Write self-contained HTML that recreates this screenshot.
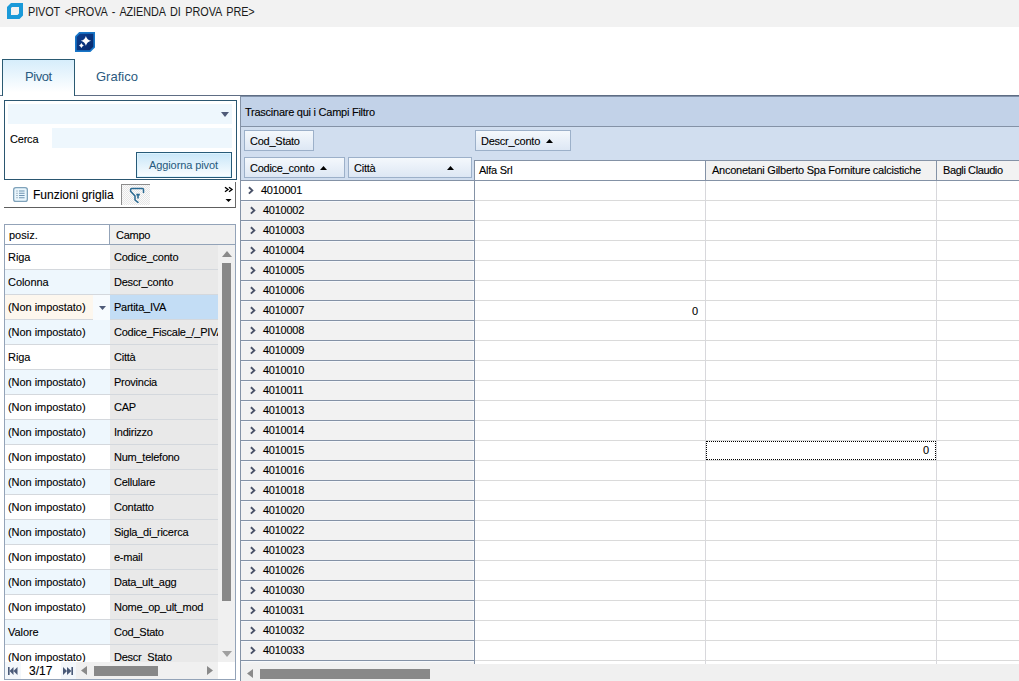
<!DOCTYPE html><html><head><meta charset="utf-8"><style>
*{box-sizing:border-box;margin:0;padding:0}
html,body{width:1019px;height:681px;overflow:hidden;background:#fff}
body{position:relative;font-family:"Liberation Sans",sans-serif;font-size:11px;color:#000}
.a{position:absolute}
.t{position:absolute;white-space:nowrap;line-height:12px;font-size:11px;letter-spacing:-0.25px;-webkit-text-stroke:0.1px currentColor}
.btn{position:absolute;border:1px solid #9cb0c9;background:linear-gradient(#f4f8fc,#dde7f4)}
</style></head><body>
<div class="a" style="left:0;top:0;width:1019px;height:27px;background:#f2f2f2"></div>
<svg class="a" style="left:7px;top:3px" width="16" height="16" viewBox="0 0 16 16"><path fill="#1a9ad9" fill-rule="evenodd" d="M4 0H16V12.5L12.5 16H0V4Z M5 4H12V10.5L10.5 12H4V5Z"/></svg>
<div class="t" style="left:28px;top:6px;font-size:12.4px;letter-spacing:-0.1px;word-spacing:2px;color:#1a1a1a;-webkit-text-stroke:0;transform:scaleX(0.877);transform-origin:0 0">PIVOT &lt;PROVA - AZIENDA DI PROVA PRE&gt;</div>
<svg class="a" style="left:75px;top:32px" width="20" height="20" viewBox="0 0 20 20"><defs><linearGradient id="g1" x1="0" y1="0" x2="1" y2="1"><stop offset="0" stop-color="#0b3f90"/><stop offset="1" stop-color="#08296c"/></linearGradient></defs><path fill="#1876c8" d="M4.2 0H20V15.4L15.4 20H0V4.2Z"/><path fill="url(#g1)" d="M4.9 1.7H18.3V14.7L14.7 18.3H1.7V4.9Z"/><path fill="#fff" d="M10.9 3.9Q11.9 7.8 16.1 8.85Q11.9 9.9 10.9 13.8Q9.9 9.9 5.8 8.85Q9.9 7.8 10.9 3.9Z"/><path fill="#fff" d="M6.4 11.1Q7.1 12.8 8.8 13.5Q7.1 14.2 6.4 15.9Q5.7 14.2 4 13.5Q5.7 12.8 6.4 11.1Z"/></svg>
<div class="a" style="left:0;top:95px;width:1019px;height:1px;background:#5e6d84"></div>
<div class="a" style="left:2px;top:59px;width:73px;height:37px;border:1px solid #2a5a72;border-bottom:none;background:linear-gradient(#d6edfb,#ffffff 90%)"></div>
<div class="t" style="left:25px;top:71px;font-size:13px;letter-spacing:-0.45px;color:#2b5a80;-webkit-text-stroke:0">Pivot</div>
<div class="t" style="left:96px;top:71px;font-size:13px;letter-spacing:0;color:#2b5a80;-webkit-text-stroke:0">Grafico</div>
<div class="a" style="left:4px;top:100px;width:233px;height:80px;border:1px solid #2a5670"></div>
<div class="a" style="left:8px;top:104px;width:224px;height:20px;background:#eef7fd"></div>
<svg class="a" style="left:221px;top:112px" width="8" height="5"><path d="M0 0H8L4 5Z" fill="#4f5b78"/></svg>
<div class="t" style="left:10px;top:133px;letter-spacing:-0.2px">Cerca</div>
<div class="a" style="left:52px;top:128px;width:180px;height:20px;background:#eef7fd"></div>
<div class="a" style="left:136px;top:152px;width:96px;height:26px;border:1px solid #275a78;box-shadow:inset 0 0 0 1px #dcf4ff;background:linear-gradient(#c8e6f8,#fbfeff)"></div>
<div class="t" style="left:149px;top:159px;letter-spacing:-0.1px;color:#285c80;-webkit-text-stroke:0.05px #285c80">Aggiorna pivot</div>
<div class="a" style="left:4px;top:207px;width:232px;height:1px;background:#5e5e5e"></div>
<div class="a" style="left:235px;top:182px;width:1px;height:26px;background:#6a6a6a"></div>
<svg class="a" style="left:13px;top:187px" width="15" height="15" viewBox="0 0 15 15"><rect x="0.65" y="0.65" width="13.7" height="13.7" rx="2.2" fill="#e9f6fd" stroke="#7fa2ba" stroke-width="1.3"/><path d="M3 4H5M3 6.3H5M3 8.5H5M3 10.7H5" stroke="#a9bccb" stroke-width="1"/><path d="M6 4H11.6M6 6.3H11.6M6 8.5H11.6M6 10.7H11.6" stroke="#6f93b0" stroke-width="1.1"/></svg>
<div class="t" style="left:33px;top:189px;font-size:12px;letter-spacing:0;color:#000">Funzioni griglia</div>
<div class="a" style="left:121px;top:184px;width:29px;height:21px;border-top:1px solid #8c8c8c;border-left:1px solid #8c8c8c;background:repeating-conic-gradient(#e6e6e6 0 25%,#fbfbfb 0 50%) 0 0/2px 2px"></div>
<svg class="a" style="left:121px;top:184px" width="29" height="21" viewBox="0 0 29 21"><path d="M17 18.3L14 16V12L9.6 7.2V5.6Q9.6 4.5 10.8 4.5H21.4Q22.5 4.5 22.5 5.6V8.6" fill="none" stroke="#2a6a92" stroke-width="1.5" stroke-linejoin="round" stroke-linecap="round"/><path d="M15.3 10.6H18.8M17 10.6V14.6" stroke="#2a6a92" stroke-width="1.6"/></svg>
<svg class="a" style="left:224px;top:186px" width="10" height="18" viewBox="0 0 10 18"><path d="M1 1.2L4 3.5L1 5.8M5 1.2L8 3.5L5 5.8" fill="none" stroke="#000" stroke-width="1.4"/><path d="M1.5 13H7.5L4.5 16Z" fill="#000"/></svg>
<div class="a" style="left:4px;top:224px;width:232px;height:456px;border:1px solid #93a3b8;overflow:hidden">
<div class="a" style="left:0;top:19px;width:105px;height:26px;background:#ffffff;border-top:1px solid #d4d8dd"></div>
<div class="a" style="left:105px;top:19px;width:108px;height:26px;background:#e9e9e9;border-top:1px solid #d4d8dd"></div>
<div class="t" style="left:3px;top:26px;letter-spacing:-0.05px">Riga</div>
<div class="t" style="left:109px;top:26px;width:104px;overflow:hidden">Codice_conto</div>
<div class="a" style="left:0;top:44px;width:105px;height:26px;background:#eef7fd;border-top:1px solid #d4d8dd"></div>
<div class="a" style="left:105px;top:44px;width:108px;height:26px;background:#e9e9e9;border-top:1px solid #d4d8dd"></div>
<div class="t" style="left:3px;top:51px;letter-spacing:-0.05px">Colonna</div>
<div class="t" style="left:109px;top:51px;width:104px;overflow:hidden">Descr_conto</div>
<div class="a" style="left:0;top:69px;width:105px;height:26px;background:#fdf7ee;border-top:1px solid #d4d8dd"></div>
<div class="a" style="left:105px;top:69px;width:108px;height:26px;background:#c3ddf5;border-top:1px solid #d4d8dd"></div>
<div class="t" style="left:3px;top:76px;letter-spacing:-0.05px">(Non impostato)</div>
<div class="t" style="left:109px;top:76px;width:104px;overflow:hidden">Partita_IVA</div>
<div class="a" style="left:0;top:94px;width:105px;height:26px;background:#eef7fd;border-top:1px solid #d4d8dd"></div>
<div class="a" style="left:105px;top:94px;width:108px;height:26px;background:#e9e9e9;border-top:1px solid #d4d8dd"></div>
<div class="t" style="left:3px;top:101px;letter-spacing:-0.05px">(Non impostato)</div>
<div class="t" style="left:109px;top:101px;width:104px;overflow:hidden">Codice_Fiscale_/_PIVA</div>
<div class="a" style="left:0;top:119px;width:105px;height:26px;background:#ffffff;border-top:1px solid #d4d8dd"></div>
<div class="a" style="left:105px;top:119px;width:108px;height:26px;background:#e9e9e9;border-top:1px solid #d4d8dd"></div>
<div class="t" style="left:3px;top:126px;letter-spacing:-0.05px">Riga</div>
<div class="t" style="left:109px;top:126px;width:104px;overflow:hidden">Città</div>
<div class="a" style="left:0;top:144px;width:105px;height:26px;background:#eef7fd;border-top:1px solid #d4d8dd"></div>
<div class="a" style="left:105px;top:144px;width:108px;height:26px;background:#e9e9e9;border-top:1px solid #d4d8dd"></div>
<div class="t" style="left:3px;top:151px;letter-spacing:-0.05px">(Non impostato)</div>
<div class="t" style="left:109px;top:151px;width:104px;overflow:hidden">Provincia</div>
<div class="a" style="left:0;top:169px;width:105px;height:26px;background:#ffffff;border-top:1px solid #d4d8dd"></div>
<div class="a" style="left:105px;top:169px;width:108px;height:26px;background:#e9e9e9;border-top:1px solid #d4d8dd"></div>
<div class="t" style="left:3px;top:176px;letter-spacing:-0.05px">(Non impostato)</div>
<div class="t" style="left:109px;top:176px;width:104px;overflow:hidden">CAP</div>
<div class="a" style="left:0;top:194px;width:105px;height:26px;background:#eef7fd;border-top:1px solid #d4d8dd"></div>
<div class="a" style="left:105px;top:194px;width:108px;height:26px;background:#e9e9e9;border-top:1px solid #d4d8dd"></div>
<div class="t" style="left:3px;top:201px;letter-spacing:-0.05px">(Non impostato)</div>
<div class="t" style="left:109px;top:201px;width:104px;overflow:hidden">Indirizzo</div>
<div class="a" style="left:0;top:219px;width:105px;height:26px;background:#ffffff;border-top:1px solid #d4d8dd"></div>
<div class="a" style="left:105px;top:219px;width:108px;height:26px;background:#e9e9e9;border-top:1px solid #d4d8dd"></div>
<div class="t" style="left:3px;top:226px;letter-spacing:-0.05px">(Non impostato)</div>
<div class="t" style="left:109px;top:226px;width:104px;overflow:hidden">Num_telefono</div>
<div class="a" style="left:0;top:244px;width:105px;height:26px;background:#eef7fd;border-top:1px solid #d4d8dd"></div>
<div class="a" style="left:105px;top:244px;width:108px;height:26px;background:#e9e9e9;border-top:1px solid #d4d8dd"></div>
<div class="t" style="left:3px;top:251px;letter-spacing:-0.05px">(Non impostato)</div>
<div class="t" style="left:109px;top:251px;width:104px;overflow:hidden">Cellulare</div>
<div class="a" style="left:0;top:269px;width:105px;height:26px;background:#ffffff;border-top:1px solid #d4d8dd"></div>
<div class="a" style="left:105px;top:269px;width:108px;height:26px;background:#e9e9e9;border-top:1px solid #d4d8dd"></div>
<div class="t" style="left:3px;top:276px;letter-spacing:-0.05px">(Non impostato)</div>
<div class="t" style="left:109px;top:276px;width:104px;overflow:hidden">Contatto</div>
<div class="a" style="left:0;top:294px;width:105px;height:26px;background:#eef7fd;border-top:1px solid #d4d8dd"></div>
<div class="a" style="left:105px;top:294px;width:108px;height:26px;background:#e9e9e9;border-top:1px solid #d4d8dd"></div>
<div class="t" style="left:3px;top:301px;letter-spacing:-0.05px">(Non impostato)</div>
<div class="t" style="left:109px;top:301px;width:104px;overflow:hidden">Sigla_di_ricerca</div>
<div class="a" style="left:0;top:319px;width:105px;height:26px;background:#ffffff;border-top:1px solid #d4d8dd"></div>
<div class="a" style="left:105px;top:319px;width:108px;height:26px;background:#e9e9e9;border-top:1px solid #d4d8dd"></div>
<div class="t" style="left:3px;top:326px;letter-spacing:-0.05px">(Non impostato)</div>
<div class="t" style="left:109px;top:326px;width:104px;overflow:hidden">e-mail</div>
<div class="a" style="left:0;top:344px;width:105px;height:26px;background:#eef7fd;border-top:1px solid #d4d8dd"></div>
<div class="a" style="left:105px;top:344px;width:108px;height:26px;background:#e9e9e9;border-top:1px solid #d4d8dd"></div>
<div class="t" style="left:3px;top:351px;letter-spacing:-0.05px">(Non impostato)</div>
<div class="t" style="left:109px;top:351px;width:104px;overflow:hidden">Data_ult_agg</div>
<div class="a" style="left:0;top:369px;width:105px;height:26px;background:#ffffff;border-top:1px solid #d4d8dd"></div>
<div class="a" style="left:105px;top:369px;width:108px;height:26px;background:#e9e9e9;border-top:1px solid #d4d8dd"></div>
<div class="t" style="left:3px;top:376px;letter-spacing:-0.05px">(Non impostato)</div>
<div class="t" style="left:109px;top:376px;width:104px;overflow:hidden">Nome_op_ult_mod</div>
<div class="a" style="left:0;top:394px;width:105px;height:26px;background:#eef7fd;border-top:1px solid #d4d8dd"></div>
<div class="a" style="left:105px;top:394px;width:108px;height:26px;background:#e9e9e9;border-top:1px solid #d4d8dd"></div>
<div class="t" style="left:3px;top:401px;letter-spacing:-0.05px">Valore</div>
<div class="t" style="left:109px;top:401px;width:104px;overflow:hidden">Cod_Stato</div>
<div class="a" style="left:0;top:419px;width:105px;height:26px;background:#ffffff;border-top:1px solid #d4d8dd"></div>
<div class="a" style="left:105px;top:419px;width:108px;height:26px;background:#e9e9e9;border-top:1px solid #d4d8dd"></div>
<div class="t" style="left:3px;top:426px;letter-spacing:-0.05px">(Non impostato)</div>
<div class="t" style="left:109px;top:426px;width:104px;overflow:hidden">Descr_Stato</div>
<div class="a" style="left:88px;top:70px;width:17px;height:25px;background:#f7fbfe"></div>
<svg class="a" style="left:94px;top:81px" width="7" height="4"><path d="M0 0H7L3.5 4Z" fill="#4f5b78"/></svg>
<div class="a" style="left:0;top:0;width:105px;height:20px;background:#fff;border-right:1px solid #93a3b8;border-bottom:1px solid #93a3b8"></div>
<div class="a" style="left:105px;top:0;width:125px;height:20px;background:#f0f0f0;border-bottom:1px solid #93a3b8"></div>
<div class="t" style="left:4px;top:4px;letter-spacing:0">posiz.</div>
<div class="t" style="left:111px;top:4px">Campo</div>
<div class="a" style="left:213px;top:20px;width:17px;height:418px;background:#f0f0f0"></div>
<svg class="a" style="left:217px;top:26px" width="10" height="6"><path d="M0 6H10L5 0Z" fill="#8a8a8a"/></svg>
<div class="a" style="left:217px;top:38px;width:9px;height:338px;background:#888"></div>
<svg class="a" style="left:217px;top:426px" width="10" height="6"><path d="M0 0H10L5 6Z" fill="#a0a0a0"/></svg>
<div class="a" style="left:0;top:437px;width:213px;height:17px;background:#f0f0f0"></div>
<div class="a" style="left:0;top:437px;width:71px;height:17px;background:#f3f7fb"></div>
<div class="a" style="left:16px;top:437px;width:40px;height:17px;background:#fff"></div>
<div class="t" style="left:24px;top:440px;font-size:12px;letter-spacing:0">3/17</div>
<svg class="a" style="left:3px;top:442px" width="10" height="8" viewBox="0 0 10 7" preserveAspectRatio="none"><rect x="0" y="0" width="1.6" height="7" fill="#4a5a78"/><path d="M5.5 0V7L1.6 3.5Z M9.5 0V7L5.5 3.5Z" fill="#4a5a78"/></svg>
<svg class="a" style="left:58px;top:442px" width="10" height="8" viewBox="0 0 10 7" preserveAspectRatio="none"><rect x="8.4" y="0" width="1.6" height="7" fill="#4a5a78"/><path d="M0 0V7L4 3.5Z M4 0V7L8.4 3.5Z" fill="#4a5a78"/></svg>
<svg class="a" style="left:76px;top:441px" width="6" height="9"><path d="M6 0V9L0 4.5Z" fill="#8a8a8a"/></svg>
<div class="a" style="left:89px;top:441px;width:64px;height:10px;background:#888"></div>
<svg class="a" style="left:202px;top:441px" width="6" height="9"><path d="M0 0V9L6 4.5Z" fill="#8a8a8a"/></svg>
<div class="a" style="left:213px;top:437px;width:17px;height:17px;background:#fff"></div>
</div>
<div class="a" style="left:240px;top:96px;width:779px;height:585px;background:#f0f0f0;border-left:1px solid #8492a6"></div>
<div class="a" style="left:241px;top:96px;width:778px;height:31px;background:#c2d2e8;border-top:1px solid #8191a9;border-bottom:1px solid #8492a6"></div>
<div class="t" style="left:245px;top:106px">Trascinare qui i Campi Filtro</div>
<div class="a" style="left:241px;top:127px;width:778px;height:53px;background:#d1deef"></div>
<div class="btn" style="left:244px;top:130px;width:70px;height:21px"></div>
<div class="t" style="left:250px;top:135px">Cod_Stato</div>
<div class="btn" style="left:475px;top:130px;width:96px;height:21px"></div>
<div class="t" style="left:481px;top:135px">Descr_conto</div>
<svg class="a" style="left:546px;top:139px" width="7" height="4"><path d="M0 4H7L3.5 0Z" fill="#000"/></svg>
<div class="btn" style="left:244px;top:157px;width:101px;height:21px"></div>
<div class="t" style="left:250px;top:162px">Codice_conto</div>
<svg class="a" style="left:320px;top:166px" width="7" height="4"><path d="M0 4H7L3.5 0Z" fill="#000"/></svg>
<div class="btn" style="left:348px;top:157px;width:124px;height:21px"></div>
<div class="t" style="left:354px;top:162px">Città</div>
<svg class="a" style="left:447px;top:166px" width="7" height="4"><path d="M0 4H7L3.5 0Z" fill="#000"/></svg>
<div class="a" style="left:241px;top:180px;width:233px;height:484px;background:#f2f2f2"></div>
<div class="a" style="left:473px;top:181px;width:1px;height:479px;background:#f8fafc"></div>
<div class="a" style="left:474px;top:160px;width:545px;height:504px;background:#fff"></div>
<div class="a" style="left:474px;top:160px;width:545px;height:21px;background:#f2f2f2;border-top:1px solid #8492a6;border-bottom:1px solid #8492a6"></div>
<div class="a" style="left:475px;top:161px;width:230px;height:19px;background:#fff"></div>
<div class="a" style="left:705px;top:160px;width:1px;height:21px;background:#8492a6"></div>
<div class="a" style="left:936px;top:160px;width:1px;height:21px;background:#8492a6"></div>
<div class="t" style="left:479px;top:164px">Alfa Srl</div>
<div class="t" style="left:712px;top:164px">Anconetani Gilberto Spa Forniture calcistiche</div>
<div class="t" style="left:943px;top:164px;letter-spacing:-0.4px">Bagli Claudio</div>
<div class="a" style="left:241px;top:180px;width:234px;height:1px;background:#8492a6"></div>
<div class="a" style="left:241px;top:181px;width:233px;height:19px;background:#fff"></div>
<div class="a" style="left:241px;top:200px;width:233px;height:1px;background:#8492a6"></div>
<div class="a" style="left:241px;top:201px;width:233px;height:1px;background:#f7f9fc"></div>
<div class="a" style="left:475px;top:200px;width:544px;height:1px;background:#dadada"></div>
<svg class="a" style="left:248px;top:186px" width="6" height="9" viewBox="0 0 6 9"><path d="M0.9 1.2L4.3 4.4L0.9 7.6" fill="none" stroke="#4a5268" stroke-width="1.9"/></svg>
<div class="t" style="left:261px;top:184px">4010001</div>
<div class="a" style="left:241px;top:220px;width:233px;height:1px;background:#8492a6"></div>
<div class="a" style="left:241px;top:221px;width:233px;height:1px;background:#f7f9fc"></div>
<div class="a" style="left:475px;top:220px;width:544px;height:1px;background:#dadada"></div>
<svg class="a" style="left:250px;top:206px" width="6" height="9" viewBox="0 0 6 9"><path d="M0.9 1.2L4.3 4.4L0.9 7.6" fill="none" stroke="#4a5268" stroke-width="1.9"/></svg>
<div class="t" style="left:263px;top:204px">4010002</div>
<div class="a" style="left:241px;top:240px;width:233px;height:1px;background:#8492a6"></div>
<div class="a" style="left:241px;top:241px;width:233px;height:1px;background:#f7f9fc"></div>
<div class="a" style="left:475px;top:240px;width:544px;height:1px;background:#dadada"></div>
<svg class="a" style="left:250px;top:226px" width="6" height="9" viewBox="0 0 6 9"><path d="M0.9 1.2L4.3 4.4L0.9 7.6" fill="none" stroke="#4a5268" stroke-width="1.9"/></svg>
<div class="t" style="left:263px;top:224px">4010003</div>
<div class="a" style="left:241px;top:260px;width:233px;height:1px;background:#8492a6"></div>
<div class="a" style="left:241px;top:261px;width:233px;height:1px;background:#f7f9fc"></div>
<div class="a" style="left:475px;top:260px;width:544px;height:1px;background:#dadada"></div>
<svg class="a" style="left:250px;top:246px" width="6" height="9" viewBox="0 0 6 9"><path d="M0.9 1.2L4.3 4.4L0.9 7.6" fill="none" stroke="#4a5268" stroke-width="1.9"/></svg>
<div class="t" style="left:263px;top:244px">4010004</div>
<div class="a" style="left:241px;top:280px;width:233px;height:1px;background:#8492a6"></div>
<div class="a" style="left:241px;top:281px;width:233px;height:1px;background:#f7f9fc"></div>
<div class="a" style="left:475px;top:280px;width:544px;height:1px;background:#dadada"></div>
<svg class="a" style="left:250px;top:266px" width="6" height="9" viewBox="0 0 6 9"><path d="M0.9 1.2L4.3 4.4L0.9 7.6" fill="none" stroke="#4a5268" stroke-width="1.9"/></svg>
<div class="t" style="left:263px;top:264px">4010005</div>
<div class="a" style="left:241px;top:300px;width:233px;height:1px;background:#8492a6"></div>
<div class="a" style="left:241px;top:301px;width:233px;height:1px;background:#f7f9fc"></div>
<div class="a" style="left:475px;top:300px;width:544px;height:1px;background:#dadada"></div>
<svg class="a" style="left:250px;top:286px" width="6" height="9" viewBox="0 0 6 9"><path d="M0.9 1.2L4.3 4.4L0.9 7.6" fill="none" stroke="#4a5268" stroke-width="1.9"/></svg>
<div class="t" style="left:263px;top:284px">4010006</div>
<div class="a" style="left:241px;top:320px;width:233px;height:1px;background:#8492a6"></div>
<div class="a" style="left:241px;top:321px;width:233px;height:1px;background:#f7f9fc"></div>
<div class="a" style="left:475px;top:320px;width:544px;height:1px;background:#dadada"></div>
<svg class="a" style="left:250px;top:306px" width="6" height="9" viewBox="0 0 6 9"><path d="M0.9 1.2L4.3 4.4L0.9 7.6" fill="none" stroke="#4a5268" stroke-width="1.9"/></svg>
<div class="t" style="left:263px;top:304px">4010007</div>
<div class="a" style="left:241px;top:340px;width:233px;height:1px;background:#8492a6"></div>
<div class="a" style="left:241px;top:341px;width:233px;height:1px;background:#f7f9fc"></div>
<div class="a" style="left:475px;top:340px;width:544px;height:1px;background:#dadada"></div>
<svg class="a" style="left:250px;top:326px" width="6" height="9" viewBox="0 0 6 9"><path d="M0.9 1.2L4.3 4.4L0.9 7.6" fill="none" stroke="#4a5268" stroke-width="1.9"/></svg>
<div class="t" style="left:263px;top:324px">4010008</div>
<div class="a" style="left:241px;top:360px;width:233px;height:1px;background:#8492a6"></div>
<div class="a" style="left:241px;top:361px;width:233px;height:1px;background:#f7f9fc"></div>
<div class="a" style="left:475px;top:360px;width:544px;height:1px;background:#dadada"></div>
<svg class="a" style="left:250px;top:346px" width="6" height="9" viewBox="0 0 6 9"><path d="M0.9 1.2L4.3 4.4L0.9 7.6" fill="none" stroke="#4a5268" stroke-width="1.9"/></svg>
<div class="t" style="left:263px;top:344px">4010009</div>
<div class="a" style="left:241px;top:380px;width:233px;height:1px;background:#8492a6"></div>
<div class="a" style="left:241px;top:381px;width:233px;height:1px;background:#f7f9fc"></div>
<div class="a" style="left:475px;top:380px;width:544px;height:1px;background:#dadada"></div>
<svg class="a" style="left:250px;top:366px" width="6" height="9" viewBox="0 0 6 9"><path d="M0.9 1.2L4.3 4.4L0.9 7.6" fill="none" stroke="#4a5268" stroke-width="1.9"/></svg>
<div class="t" style="left:263px;top:364px">4010010</div>
<div class="a" style="left:241px;top:400px;width:233px;height:1px;background:#8492a6"></div>
<div class="a" style="left:241px;top:401px;width:233px;height:1px;background:#f7f9fc"></div>
<div class="a" style="left:475px;top:400px;width:544px;height:1px;background:#dadada"></div>
<svg class="a" style="left:250px;top:386px" width="6" height="9" viewBox="0 0 6 9"><path d="M0.9 1.2L4.3 4.4L0.9 7.6" fill="none" stroke="#4a5268" stroke-width="1.9"/></svg>
<div class="t" style="left:263px;top:384px">4010011</div>
<div class="a" style="left:241px;top:420px;width:233px;height:1px;background:#8492a6"></div>
<div class="a" style="left:241px;top:421px;width:233px;height:1px;background:#f7f9fc"></div>
<div class="a" style="left:475px;top:420px;width:544px;height:1px;background:#dadada"></div>
<svg class="a" style="left:250px;top:406px" width="6" height="9" viewBox="0 0 6 9"><path d="M0.9 1.2L4.3 4.4L0.9 7.6" fill="none" stroke="#4a5268" stroke-width="1.9"/></svg>
<div class="t" style="left:263px;top:404px">4010013</div>
<div class="a" style="left:241px;top:440px;width:233px;height:1px;background:#8492a6"></div>
<div class="a" style="left:241px;top:441px;width:233px;height:1px;background:#f7f9fc"></div>
<div class="a" style="left:475px;top:440px;width:544px;height:1px;background:#dadada"></div>
<svg class="a" style="left:250px;top:426px" width="6" height="9" viewBox="0 0 6 9"><path d="M0.9 1.2L4.3 4.4L0.9 7.6" fill="none" stroke="#4a5268" stroke-width="1.9"/></svg>
<div class="t" style="left:263px;top:424px">4010014</div>
<div class="a" style="left:241px;top:460px;width:233px;height:1px;background:#8492a6"></div>
<div class="a" style="left:241px;top:461px;width:233px;height:1px;background:#f7f9fc"></div>
<div class="a" style="left:475px;top:460px;width:544px;height:1px;background:#dadada"></div>
<svg class="a" style="left:250px;top:446px" width="6" height="9" viewBox="0 0 6 9"><path d="M0.9 1.2L4.3 4.4L0.9 7.6" fill="none" stroke="#4a5268" stroke-width="1.9"/></svg>
<div class="t" style="left:263px;top:444px">4010015</div>
<div class="a" style="left:241px;top:480px;width:233px;height:1px;background:#8492a6"></div>
<div class="a" style="left:241px;top:481px;width:233px;height:1px;background:#f7f9fc"></div>
<div class="a" style="left:475px;top:480px;width:544px;height:1px;background:#dadada"></div>
<svg class="a" style="left:250px;top:466px" width="6" height="9" viewBox="0 0 6 9"><path d="M0.9 1.2L4.3 4.4L0.9 7.6" fill="none" stroke="#4a5268" stroke-width="1.9"/></svg>
<div class="t" style="left:263px;top:464px">4010016</div>
<div class="a" style="left:241px;top:500px;width:233px;height:1px;background:#8492a6"></div>
<div class="a" style="left:241px;top:501px;width:233px;height:1px;background:#f7f9fc"></div>
<div class="a" style="left:475px;top:500px;width:544px;height:1px;background:#dadada"></div>
<svg class="a" style="left:250px;top:486px" width="6" height="9" viewBox="0 0 6 9"><path d="M0.9 1.2L4.3 4.4L0.9 7.6" fill="none" stroke="#4a5268" stroke-width="1.9"/></svg>
<div class="t" style="left:263px;top:484px">4010018</div>
<div class="a" style="left:241px;top:520px;width:233px;height:1px;background:#8492a6"></div>
<div class="a" style="left:241px;top:521px;width:233px;height:1px;background:#f7f9fc"></div>
<div class="a" style="left:475px;top:520px;width:544px;height:1px;background:#dadada"></div>
<svg class="a" style="left:250px;top:506px" width="6" height="9" viewBox="0 0 6 9"><path d="M0.9 1.2L4.3 4.4L0.9 7.6" fill="none" stroke="#4a5268" stroke-width="1.9"/></svg>
<div class="t" style="left:263px;top:504px">4010020</div>
<div class="a" style="left:241px;top:540px;width:233px;height:1px;background:#8492a6"></div>
<div class="a" style="left:241px;top:541px;width:233px;height:1px;background:#f7f9fc"></div>
<div class="a" style="left:475px;top:540px;width:544px;height:1px;background:#dadada"></div>
<svg class="a" style="left:250px;top:526px" width="6" height="9" viewBox="0 0 6 9"><path d="M0.9 1.2L4.3 4.4L0.9 7.6" fill="none" stroke="#4a5268" stroke-width="1.9"/></svg>
<div class="t" style="left:263px;top:524px">4010022</div>
<div class="a" style="left:241px;top:560px;width:233px;height:1px;background:#8492a6"></div>
<div class="a" style="left:241px;top:561px;width:233px;height:1px;background:#f7f9fc"></div>
<div class="a" style="left:475px;top:560px;width:544px;height:1px;background:#dadada"></div>
<svg class="a" style="left:250px;top:546px" width="6" height="9" viewBox="0 0 6 9"><path d="M0.9 1.2L4.3 4.4L0.9 7.6" fill="none" stroke="#4a5268" stroke-width="1.9"/></svg>
<div class="t" style="left:263px;top:544px">4010023</div>
<div class="a" style="left:241px;top:580px;width:233px;height:1px;background:#8492a6"></div>
<div class="a" style="left:241px;top:581px;width:233px;height:1px;background:#f7f9fc"></div>
<div class="a" style="left:475px;top:580px;width:544px;height:1px;background:#dadada"></div>
<svg class="a" style="left:250px;top:566px" width="6" height="9" viewBox="0 0 6 9"><path d="M0.9 1.2L4.3 4.4L0.9 7.6" fill="none" stroke="#4a5268" stroke-width="1.9"/></svg>
<div class="t" style="left:263px;top:564px">4010026</div>
<div class="a" style="left:241px;top:600px;width:233px;height:1px;background:#8492a6"></div>
<div class="a" style="left:241px;top:601px;width:233px;height:1px;background:#f7f9fc"></div>
<div class="a" style="left:475px;top:600px;width:544px;height:1px;background:#dadada"></div>
<svg class="a" style="left:250px;top:586px" width="6" height="9" viewBox="0 0 6 9"><path d="M0.9 1.2L4.3 4.4L0.9 7.6" fill="none" stroke="#4a5268" stroke-width="1.9"/></svg>
<div class="t" style="left:263px;top:584px">4010030</div>
<div class="a" style="left:241px;top:620px;width:233px;height:1px;background:#8492a6"></div>
<div class="a" style="left:241px;top:621px;width:233px;height:1px;background:#f7f9fc"></div>
<div class="a" style="left:475px;top:620px;width:544px;height:1px;background:#dadada"></div>
<svg class="a" style="left:250px;top:606px" width="6" height="9" viewBox="0 0 6 9"><path d="M0.9 1.2L4.3 4.4L0.9 7.6" fill="none" stroke="#4a5268" stroke-width="1.9"/></svg>
<div class="t" style="left:263px;top:604px">4010031</div>
<div class="a" style="left:241px;top:640px;width:233px;height:1px;background:#8492a6"></div>
<div class="a" style="left:241px;top:641px;width:233px;height:1px;background:#f7f9fc"></div>
<div class="a" style="left:475px;top:640px;width:544px;height:1px;background:#dadada"></div>
<svg class="a" style="left:250px;top:626px" width="6" height="9" viewBox="0 0 6 9"><path d="M0.9 1.2L4.3 4.4L0.9 7.6" fill="none" stroke="#4a5268" stroke-width="1.9"/></svg>
<div class="t" style="left:263px;top:624px">4010032</div>
<div class="a" style="left:241px;top:660px;width:233px;height:1px;background:#8492a6"></div>
<div class="a" style="left:241px;top:661px;width:233px;height:1px;background:#f7f9fc"></div>
<div class="a" style="left:475px;top:660px;width:544px;height:1px;background:#dadada"></div>
<svg class="a" style="left:250px;top:646px" width="6" height="9" viewBox="0 0 6 9"><path d="M0.9 1.2L4.3 4.4L0.9 7.6" fill="none" stroke="#4a5268" stroke-width="1.9"/></svg>
<div class="t" style="left:263px;top:644px">4010033</div>
<div class="a" style="left:474px;top:160px;width:1px;height:504px;background:#8492a6"></div>
<div class="a" style="left:705px;top:181px;width:1px;height:483px;background:#d8d8dc"></div>
<div class="a" style="left:936px;top:181px;width:1px;height:483px;background:#d8d8dc"></div>
<div class="t" style="left:692px;top:305px">0</div>
<div class="a" style="left:706px;top:441px;width:230px;height:19px;border:1px dotted #000"></div>
<div class="t" style="left:923px;top:444px">0</div>
<svg class="a" style="left:247px;top:669px" width="6" height="9"><path d="M6 0V9L0 4.5Z" fill="#8a8a8a"/></svg>
<div class="a" style="left:260px;top:669px;width:170px;height:10px;background:#888"></div>
</body></html>
